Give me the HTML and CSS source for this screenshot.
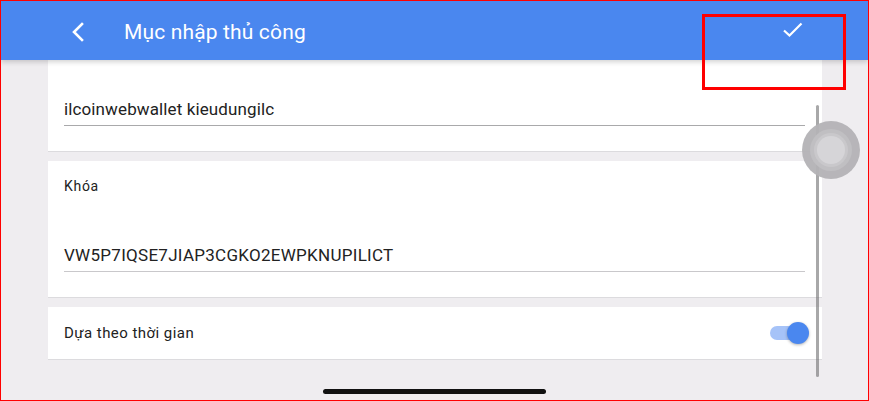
FILE: index.html
```html
<!doctype html>
<html lang="vi">
<head>
  <meta charset="UTF-8">
  <meta name="viewport" content="width=device-width, initial-scale=1">
  <title>Mục nhập thủ công</title>
  <link rel="stylesheet" href="styles.css">
</head>
<body>

  <div class="frame">
    <div class="topbar">
      <svg class="back" width="14" height="20" viewBox="0 0 14 20">
        <path d="M11 2 L3 10 L11 18" fill="none" stroke="#fff" stroke-width="2.6" stroke-linecap="square"/>
      </svg>
      <h1 class="title">Mục nhập thủ công</h1>
      <svg class="done" width="22" height="16" viewBox="0 0 22 16">
        <path d="M2 8.5 L7.5 13.5 L19.5 1.5" fill="none" stroke="#fff" stroke-width="2.2"/>
      </svg>
    </div>

    <div class="content">
      <div class="card card-name">
        <div class="field">ilcoinwebwallet kieudungilc</div>
      </div>

      <div class="card card-key">
        <div class="label">Khóa</div>
        <div class="field field-key">VW5P7IQSE7JIAP3CGKO2EWPKNUPILICT</div>
      </div>

      <div class="card card-switch">
        <span class="switch-label">Dựa theo thời gian</span>
        <span class="toggle"><span class="knob"></span></span>
      </div>
    </div>

    <!-- overlays -->
    <div class="scrollbar"></div>
    <svg class="assist" width="60" height="60" viewBox="0 0 60 60">
      <circle cx="30" cy="30" r="29" fill="#b3b2b5" opacity="0.95"/>
      <circle cx="30" cy="30" r="21" fill="#c0bfc2"/>
      <circle cx="30" cy="30" r="17" fill="#c9c8cb"/>
      <circle cx="30" cy="30" r="14" fill="#d6d5d8"/>
    </svg>
    <div class="annot"></div>
    <div class="home-bar"></div>
  </div>

</body>
</html>
```

FILE: styles.css
```css
html, body {
  height: 100%;
}
body {
  margin: 0;
  font-family: Roboto, "Noto Sans", sans-serif;
  color: #222;
  background: #fff;
}
.frame {
  position: relative;
  box-sizing: border-box;
  width: 869px;
  height: 401px;
  overflow: hidden;
  border: 1px solid #f00;
  background: #efedf0;
}

.topbar {
  position: relative;
  z-index: 2;
  display: flex;
  align-items: center;
  height: 59px;
  padding-left: 70px;
  padding-right: 64px;
  background: #4a87ef;
  box-shadow: 0 2px 5px rgba(0, 0, 0, 0.18);
}
.back {
  display: block;
  margin-top: 3px;
}
.title {
  flex: 1;
  margin: 0 0 0 39px;
  padding-top: 2px;
  font-size: 21px;
  font-weight: 400;
  color: #fff;
  letter-spacing: 0.15px;
}
.done {
  display: block;
  margin-top: -1px;
}

.content {
  display: flex;
  flex-direction: column;
  gap: 9px;
  padding: 0 46px 0 47px;
}
.card {
  background: #fff;
  border-bottom: 1px solid #dcdbde;
  padding: 0 17px 0 16px;
}
.card-name {
  padding-top: 39px;
  padding-bottom: 25px;
}
.card-key {
  padding-top: 17px;
  padding-bottom: 25px;
}
.label {
  font-size: 14px;
  line-height: 16px;
  letter-spacing: 0.7px;
}
.field {
  font-size: 17px;
  line-height: 20px;
  padding-bottom: 6px;
  border-bottom: 1px solid #a9a9ab;
  letter-spacing: 0.12px;
}
.field-key {
  margin-top: 51px;
  border-bottom-color: #c9c8cb;
  letter-spacing: 0.28px;
}

.card-switch {
  display: flex;
  align-items: center;
  justify-content: space-between;
  height: 52px;
  padding-right: 13px;
}
.switch-label {
  font-size: 15px;
  line-height: 18px;
  letter-spacing: 0.45px;
}
.toggle {
  position: relative;
  display: block;
  width: 36px;
  height: 14px;
  margin-right: 3px;
  border-radius: 7px;
  background: #a6c3f8;
}
.knob {
  position: absolute;
  right: -3px;
  top: -4px;
  width: 22px;
  height: 22px;
  border-radius: 50%;
  background: #4a87ef;
  box-shadow: 0 1px 3px rgba(0, 0, 0, 0.3);
}

.scrollbar {
  position: absolute;
  left: 815px;
  top: 104px;
  width: 3px;
  height: 272px;
  border-radius: 2px;
  background: rgba(110, 110, 112, 0.6);
}
.assist {
  position: absolute;
  left: 800px;
  top: 119px;
}
.annot {
  position: absolute;
  z-index: 3;
  left: 701px;
  top: 13px;
  width: 138px;
  height: 70px;
  border: 3px solid #f00;
}
.home-bar {
  position: absolute;
  left: 322px;
  top: 388px;
  width: 223px;
  height: 5px;
  border-radius: 3px;
  background: #111;
}
```
